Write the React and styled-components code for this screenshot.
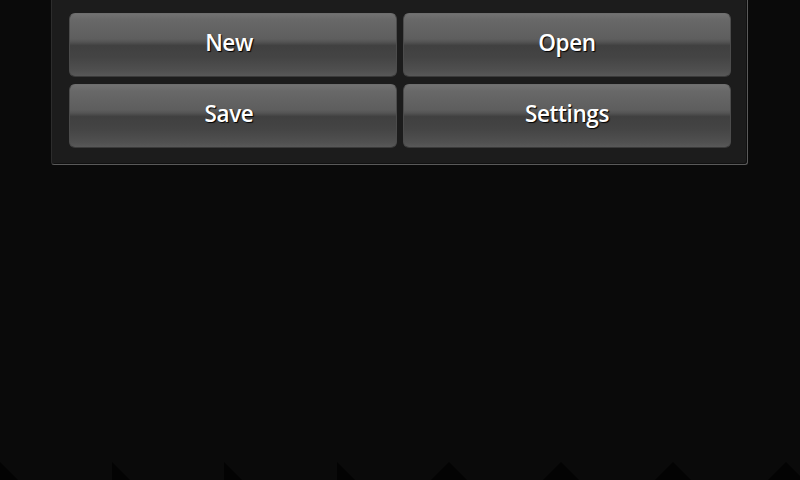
import React from 'react'
import styled, { createGlobalStyle } from 'styled-components'

const Global = createGlobalStyle`
    html, body {
        margin: 0;
        padding: 0;
        background: #0a0a0a;
    }
    #root {
        width: 800px;
        height: 480px;
        overflow: hidden;
    }
`

const Screen = styled.div`
    width: 800px;
    height: 480px;
    display: flex;
    flex-direction: column;
    justify-content: space-between;
    background: #0a0a0a;
`

const Menu = styled.div`
    margin-left: 51px;
    width: 697px;
    box-sizing: border-box;
    padding: 13px 16px 16px 17px;
    background: #1c1c1c;
    border-left: 1px solid #2c2c2c;
    border-right: 1px solid #5a5a5a;
    border-bottom: 1px solid #5a5a5a;
    border-radius: 0 0 3px 3px;
    box-shadow: inset -1px -1px 0 #101010;
    display: grid;
    grid-template-columns: 328px 328px;
    grid-auto-rows: 64px;
    column-gap: 6px;
    row-gap: 7px;
`

const Button = styled.button`
    box-sizing: border-box;
    border: 1px solid #4c4c4c;
    border-top-color: #6e6e6e;
    border-bottom-color: #3a3a3a;
    border-radius: 6px;
    background: linear-gradient(
        to bottom,
        #727272 0%,
        #686868 10%,
        #5e5e5e 40%,
        #545454 45%,
        #404040 51%,
        #444444 70%,
        #505050 92%,
        #585858 100%
    );
    color: #ffffff;
    font-family: "Open Sans", "DejaVu Sans", sans-serif;
    font-weight: 600;
    font-size: 22.5px;
    letter-spacing: -0.4px;
    text-shadow: 1px 1px 1px #000000;
    padding: 0 ${({ $left }) => ($left ? '8px' : '0')} 5px 0;
    cursor: pointer;
`

const Teeth = styled.svg`
    display: block;
    width: 800px;
    height: 18px;
`

const halfTeeth = [0, 112, 224, 337]
const fullTeeth = [449, 561, 673, 786]

export default function App() {
    return (
        <Screen>
            <Global />
            <Menu>
                <Button $left>New</Button>
                <Button>Open</Button>
                <Button $left>Save</Button>
                <Button>Settings</Button>
            </Menu>
            <Teeth viewBox="0 0 800 18">
                {halfTeeth.map((x) => (
                    <polygon key={x} points={`${x},0 ${x + 18},18 ${x},18`} fill="#030303" />
                ))}
                {fullTeeth.map((x) => (
                    <polygon key={x} points={`${x},0 ${x + 18},18 ${x - 18},18`} fill="#030303" />
                ))}
            </Teeth>
        </Screen>
    )
}
